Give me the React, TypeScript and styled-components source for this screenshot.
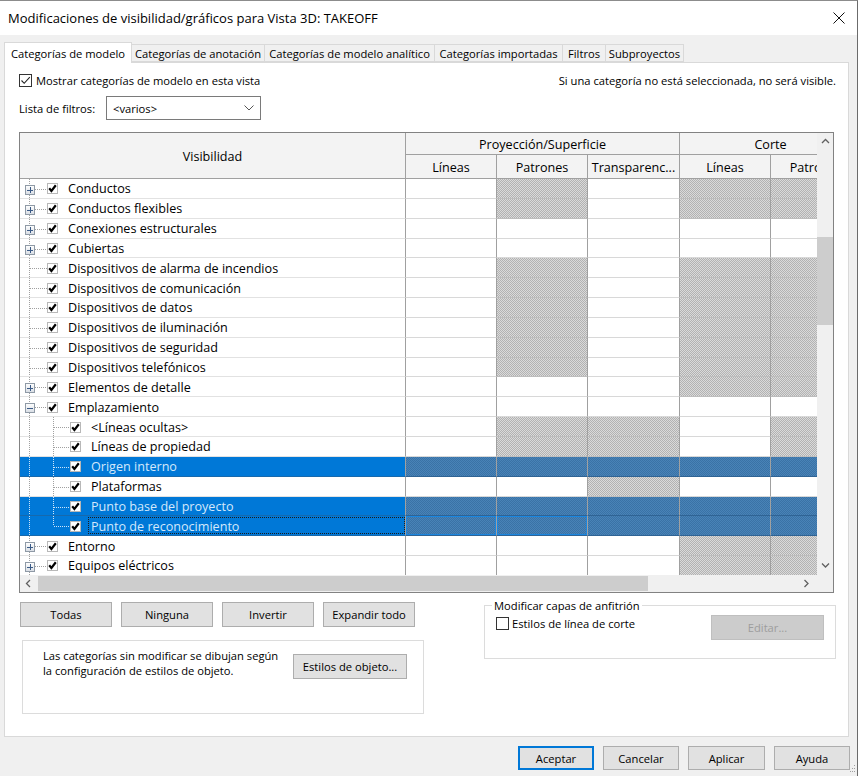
import React from "react";
import styled, { createGlobalStyle, css } from "styled-components";

const GlobalStyle = createGlobalStyle`
  html, body { margin: 0; padding: 0; background: #ffffff; }
  body {
    font-family: "Open Sans", "Liberation Sans", Arial, sans-serif;
    font-size: 11.2px;
    color: #000;
  }
  * { box-sizing: border-box; }
`;

type Row = {
  label: string;
  level?: 0 | 1;
  expander?: "plus" | "minus";
  hatch?: string;
  selected?: boolean;
  focused?: boolean;
  lastChild?: boolean;
};

const rows: Row[] = [
  { label: "Conductos", expander: "plus", hatch: "01011" },
  { label: "Conductos flexibles", expander: "plus", hatch: "01011" },
  { label: "Conexiones estructurales", expander: "plus", hatch: "00000" },
  { label: "Cubiertas", expander: "plus", hatch: "00000" },
  { label: "Dispositivos de alarma de incendios", hatch: "01011" },
  { label: "Dispositivos de comunicación", hatch: "01011" },
  { label: "Dispositivos de datos", hatch: "01011" },
  { label: "Dispositivos de iluminación", hatch: "01011" },
  { label: "Dispositivos de seguridad", hatch: "01011" },
  { label: "Dispositivos telefónicos", hatch: "01011" },
  { label: "Elementos de detalle", expander: "plus", hatch: "00011" },
  { label: "Emplazamiento", expander: "minus", hatch: "00000" },
  { label: "<Líneas ocultas>", level: 1, hatch: "01101" },
  { label: "Líneas de propiedad", level: 1, hatch: "01101" },
  { label: "Origen interno", level: 1, selected: true },
  { label: "Plataformas", level: 1, hatch: "00100" },
  { label: "Punto base del proyecto", level: 1, selected: true },
  { label: "Punto de reconocimiento", level: 1, selected: true, focused: true, lastChild: true },
  { label: "Entorno", expander: "plus", hatch: "00011" },
  { label: "Equipos eléctricos", expander: "plus", hatch: "00011" },
];

const COLS = "386px 91px 91px 92px 91px 91px";

const Window = styled.div`
  position: relative;
  width: 858px;
  height: 776px;
  background: #f0f0f0;
  border-top: 1px solid #8c8c8c;
  border-right: 1px solid #6b6b6b;
  display: flex;
  flex-direction: column;
`;

const TitleBar = styled.div`
  height: 34px;
  flex-shrink: 0;
  background: #ffffff;
  display: flex;
  align-items: center;
  justify-content: space-between;
  padding: 0 12px 0 8px;
  font-size: 13px;
`;

const Body = styled.div`
  padding-top: 7px;
  display: flex;
  flex-direction: column;
`;

const TabStrip = styled.div`
  display: flex;
  align-items: flex-end;
  height: 20px;
  margin-left: 4px;
  position: relative;
  z-index: 1;
`;

const Tab = styled.div<{ $w: number; $active?: boolean }>`
  width: ${(p) => p.$w}px;
  height: ${(p) => (p.$active ? 21 : 18)}px;
  margin-bottom: ${(p) => (p.$active ? -1 : 0)}px;
  background: ${(p) => (p.$active ? "#ffffff" : "#f0f0f0")};
  border: 1px solid #d9d9d9;
  border-bottom: ${(p) => (p.$active ? "none" : "1px solid #d9d9d9")};
  display: flex;
  align-items: center;
  justify-content: center;
  white-space: nowrap;
  & + & { margin-left: -1px; }
`;

const Panel = styled.div`
  margin-left: 4px;
  width: 845px;
  height: 675px;
  background: #ffffff;
  border: 1px solid #d9d9d9;
  display: flex;
  flex-direction: column;
`;

const TopRow = styled.div`
  display: flex;
  align-items: center;
  justify-content: space-between;
  height: 13px;
  margin-top: 11px;
  padding: 0 12px 0 14px;
`;

const CheckLabel = styled.label`
  display: flex;
  align-items: center;
  gap: 4px;
  white-space: nowrap;
`;

const WinCheck = styled.span`
  width: 13px;
  height: 13px;
  border: 1px solid #333333;
  background: #ffffff;
  display: inline-flex;
  align-items: center;
  justify-content: center;
  flex-shrink: 0;
`;

const FilterRow = styled.div`
  display: flex;
  align-items: center;
  height: 24px;
  margin-top: 9px;
  padding-left: 14px;
`;

const FilterLabel = styled.span`
  width: 87px;
`;

const Select = styled.div`
  width: 155px;
  height: 24px;
  border: 1px solid #7a7a7a;
  background: #ffffff;
  display: flex;
  align-items: center;
  justify-content: space-between;
  padding: 0 6px 0 6px;
`;

const GridFrame = styled.div`
  margin: 12px 0 0 14px;
  width: 815px;
  border: 1px solid #828282;
  display: grid;
  grid-template-columns: 797px 16px;
  grid-template-rows: 442px 17px;
`;

const Table = styled.div`
  width: 797px;
  overflow: hidden;
`;

const Header = styled.div`
  display: grid;
  width: 842px;
  grid-template-columns: ${COLS};
  grid-template-rows: 22px 24px;
`;

const HeadCell = styled.div<{ $col: string; $row: string }>`
  grid-column: ${(p) => p.$col};
  grid-row: ${(p) => p.$row};
  display: flex;
  align-items: center;
  justify-content: center;
  padding-top: 1px;
  background: #f3f3f3;
  border-right: 1px solid #a0a0a0;
  border-bottom: 1px solid #a0a0a0;
  font-size: 12.6px;
  white-space: nowrap;
  overflow: hidden;
`;

const TreeBody = styled.div`
  height: 396px;
  overflow: hidden;
`;

const RowLine = styled.div`
  display: grid;
  width: 842px;
  grid-template-columns: ${COLS};
  height: 19.85px;
`;

const TreeCell = styled.div<{ $sel?: boolean }>`
  display: flex;
  align-items: center;
  overflow: hidden;
  background: ${(p) => (p.$sel ? "#0078d7" : "#ffffff")};
  color: ${(p) => (p.$sel ? "#d4e8fb" : "#000000")};
  border-right: 1px solid #a0a0a0;
  border-bottom: 1px solid ${(p) => (p.$sel ? "#1669ad" : "#e2e2e2")};
  font-size: 12.6px;
  white-space: nowrap;
`;

const Gutter = styled.svg`
  flex-shrink: 0;
  align-self: flex-start;
`;

const TreeCheck = styled.svg`
  flex-shrink: 0;
  margin-top: 1px;
`;

const Label = styled.span<{ $focus?: boolean }>`
  margin-left: 10px;
  padding-top: 1px;
  ${(p) =>
    p.$focus &&
    css`
      margin: 1px 0 1px 7px;
      padding-left: 2px;
      align-self: stretch;
      flex: 1;
      display: flex;
      align-items: center;
      border: 1px dotted #1b1b1b;
    `}
`;

const hatchBg = "repeating-conic-gradient(#b2b2b2 0 25%, #dadada 0 50%) 0 0 / 2px 2px";
const selBg = "repeating-conic-gradient(#3a72a6 0 25%, #4983b7 0 50%) 0 0 / 2px 2px";

const DataCell = styled.div<{ $hatch?: boolean; $sel?: boolean; $focus?: boolean }>`
  border-right: 1px solid #a0a0a0;
  border-bottom: 1px solid ${(p) => (p.$sel ? "#2f6394" : p.$hatch ? "#bdbdbd" : "#d8d8d8")};
  background: ${(p) => (p.$sel ? selBg : p.$hatch ? hatchBg : "#ffffff")};
  ${(p) =>
    p.$focus &&
    css`
      box-shadow: inset 0 0 0 1px #1a86e0;
    `}
`;

const VScroll = styled.div`
  grid-column: 2;
  grid-row: 1;
  background: #f0f0f0;
  display: flex;
  flex-direction: column;
`;

const Arrow = styled.div<{ $size: number }>`
  flex: 0 0 ${(p) => p.$size}px;
  display: flex;
  align-items: center;
  justify-content: center;
`;

const VThumb = styled.div`
  height: 88px;
  margin-top: 87px;
  background: #cdcdcd;
`;

const Spacer = styled.div`
  flex: 1;
`;

const HScroll = styled.div`
  grid-column: 1;
  grid-row: 2;
  background: #f0f0f0;
  display: flex;
  align-items: center;
`;

const HThumb = styled.div`
  width: 610px;
  height: 15px;
  margin-left: 1px;
  background: #cdcdcd;
`;

const Corner = styled.div`
  grid-column: 2;
  grid-row: 2;
  background: #f0f0f0;
`;

const LowerArea = styled.div`
  display: flex;
  justify-content: space-between;
  align-items: flex-start;
  margin-top: 9px;
  padding: 0 12px 0 15px;
`;

const LeftCol = styled.div`
  display: flex;
  flex-direction: column;
`;

const ButtonRow = styled.div`
  display: flex;
  gap: 9px;
`;

const Button = styled.button<{ $w: number; $h?: number; $primary?: boolean; $off?: boolean }>`
  width: ${(p) => p.$w}px;
  height: ${(p) => p.$h ?? 25}px;
  padding: 0;
  font: inherit;
  color: ${(p) => (p.$off ? "#9d9d9d" : "#000000")};
  background: ${(p) => (p.$off ? "#cccccc" : "#e1e1e1")};
  border: 1px solid ${(p) => (p.$primary ? "#0078d7" : p.$off ? "#bfbfbf" : "#adadad")};
  ${(p) =>
    p.$primary &&
    css`
      box-shadow: inset 0 0 0 1px #0078d7;
    `}
`;

const InfoBox = styled.div`
  margin: 13px 0 0 2px;
  width: 402px;
  height: 74px;
  border: 1px solid #dcdcdc;
  display: flex;
  align-items: flex-start;
  padding: 7px 0 0 20px;
`;

const InfoText = styled.div`
  width: 250px;
  line-height: 15px;
`;

const InfoButton = styled(Button)`
  margin-top: 6px;
`;

const Group = styled.fieldset`
  margin: -4px 0 0 0;
  width: 352px;
  height: 61px;
  border: 1px solid #dcdcdc;
  padding: 2px 11px 0 11px;
`;

const GroupLegend = styled.legend`
  padding: 0 2px;
  margin-left: -4px;
`;

const GroupRow = styled.div`
  display: flex;
  justify-content: space-between;
  align-items: flex-start;
`;

const GroupCheck = styled(CheckLabel)`
  margin-top: 1px;
  gap: 3px;
`;

const Footer = styled.div`
  display: flex;
  justify-content: flex-end;
  gap: 9px;
  padding: 9px 7px 0 0;
`;

const Grip = styled.svg`
  position: absolute;
  right: 1px;
  bottom: 3px;
`;

const Chevron = ({ dir }: { dir: "up" | "down" | "left" | "right" }) => {
  const d = {
    up: "M1 5 L4.5 1.5 L8 5",
    down: "M1 1.5 L4.5 5 L8 1.5",
    left: "M5 1 L1.5 4.5 L5 8",
    right: "M1.5 1 L5 4.5 L1.5 8",
  }[dir];
  const v = dir === "up" || dir === "down";
  return (
    <svg width={v ? 9 : 7} height={v ? 7 : 9}>
      <path d={d} stroke="#606060" strokeWidth={1.3} fill="none" />
    </svg>
  );
};

const TreeGutter = ({ row }: { row: Row }) => {
  const c = row.selected ? "#cfe4f8" : "#a0a0a0";
  const w = row.level === 1 ? 50 : 27;
  const dot = { stroke: c, strokeDasharray: "1 1", shapeRendering: "crispEdges" as const };
  return (
    <Gutter width={w} height={20} viewBox={`0 0 ${w} 20`}>
      <line x1={9.5} y1={0} x2={9.5} y2={20} {...dot} />
      {row.level === 1 ? (
        <>
          <line x1={33.5} y1={0} x2={33.5} y2={row.lastChild ? 10 : 20} {...dot} />
          <line x1={34} y1={10.5} x2={50} y2={10.5} {...dot} />
        </>
      ) : row.expander ? (
        <>
          <line x1={15} y1={10.5} x2={27} y2={10.5} {...dot} />
          <defs>
            <linearGradient id="exp" x1="0" y1="0" x2="0" y2="1">
              <stop offset="0" stopColor="#ffffff" />
              <stop offset="1" stopColor="#d8dde4" />
            </linearGradient>
          </defs>
          <rect x={5.5} y={6.5} width={9} height={9} fill="url(#exp)" stroke="#8f9aa6" shapeRendering="crispEdges" />
          <line x1={7} y1={11} x2={13} y2={11} stroke="#3a5a86" shapeRendering="crispEdges" />
          {row.expander === "plus" && (
            <line x1={10} y1={8} x2={10} y2={14} stroke="#3a5a86" shapeRendering="crispEdges" />
          )}
        </>
      ) : (
        <line x1={10} y1={10.5} x2={27} y2={10.5} {...dot} />
      )}
    </Gutter>
  );
};

const CheckMark = () => (
  <TreeCheck width={11} height={11}>
    <rect x={0.5} y={0.5} width={10} height={10} fill="#ffffff" stroke="#b8b8b8" />
    <path d="M2.2 5.3 L4.4 7.9 L8.8 2.3" stroke="#000000" strokeWidth={2.2} fill="none" />
  </TreeCheck>
);

const TableRow = ({ row }: { row: Row }) => {
  const h = row.hatch ?? "00000";
  return (
    <RowLine>
      <TreeCell $sel={row.selected}>
        <TreeGutter row={row} />
        <CheckMark />
        <Label $focus={row.focused}>{row.label}</Label>
      </TreeCell>
      {[0, 1, 2, 3, 4].map((i) => (
        <DataCell
          key={i}
          $hatch={h[i] === "1"}
          $sel={row.selected}
          $focus={row.focused && i < 2}
        />
      ))}
    </RowLine>
  );
};

export default function App() {
  return (
    <>
      <GlobalStyle />
      <Window>
        <TitleBar>
          <span>Modificaciones de visibilidad/gráficos para Vista 3D: TAKEOFF</span>
          <svg width={12} height={12}>
            <path d="M0.5 0.5 L11.5 11.5 M11.5 0.5 L0.5 11.5" stroke="#111" strokeWidth={1} />
          </svg>
        </TitleBar>
        <Body>
          <TabStrip>
            <Tab $w={128} $active>Categorías de modelo</Tab>
            <Tab $w={134}>Categorías de anotación</Tab>
            <Tab $w={171}>Categorías de modelo analítico</Tab>
            <Tab $w={129}>Categorías importadas</Tab>
            <Tab $w={44}>Filtros</Tab>
            <Tab $w={79}>Subproyectos</Tab>
          </TabStrip>
          <Panel>
            <TopRow>
              <CheckLabel>
                <WinCheck>
                  <svg width={11} height={11}>
                    <path d="M1.5 5.5 L4.2 8.3 L9.8 2.2" stroke="#222" strokeWidth={1.1} fill="none" />
                  </svg>
                </WinCheck>
                Mostrar categorías de modelo en esta vista
              </CheckLabel>
              <span>Si una categoría no está seleccionada, no será visible.</span>
            </TopRow>
            <FilterRow>
              <FilterLabel>Lista de filtros:</FilterLabel>
              <Select>
                <span>&lt;varios&gt;</span>
                <svg width={10} height={6}>
                  <path d="M0.5 0.5 L5 5 L9.5 0.5" stroke="#555" fill="none" />
                </svg>
              </Select>
            </FilterRow>
            <GridFrame>
              <Table>
                <Header>
                  <HeadCell $col="1" $row="1 / span 2">Visibilidad</HeadCell>
                  <HeadCell $col="2 / span 3" $row="1">Proyección/Superficie</HeadCell>
                  <HeadCell $col="5 / span 2" $row="1">Corte</HeadCell>
                  <HeadCell $col="2" $row="2">Líneas</HeadCell>
                  <HeadCell $col="3" $row="2">Patrones</HeadCell>
                  <HeadCell $col="4" $row="2">Transparenc...</HeadCell>
                  <HeadCell $col="5" $row="2">Líneas</HeadCell>
                  <HeadCell $col="6" $row="2">Patrones</HeadCell>
                </Header>
                <TreeBody>
                  {rows.map((r) => (
                    <TableRow key={r.label} row={r} />
                  ))}
                </TreeBody>
              </Table>
              <VScroll>
                <Arrow $size={17}>
                  <Chevron dir="up" />
                </Arrow>
                <VThumb />
                <Spacer />
                <Arrow $size={20}>
                  <Chevron dir="down" />
                </Arrow>
              </VScroll>
              <HScroll>
                <Arrow $size={17}>
                  <Chevron dir="left" />
                </Arrow>
                <HThumb />
                <Spacer />
                <Arrow $size={22}>
                  <Chevron dir="right" />
                </Arrow>
              </HScroll>
              <Corner />
            </GridFrame>
            <LowerArea>
              <LeftCol>
                <ButtonRow>
                  <Button $w={92}>Todas</Button>
                  <Button $w={92}>Ninguna</Button>
                  <Button $w={92}>Invertir</Button>
                  <Button $w={92}>Expandir todo</Button>
                </ButtonRow>
                <InfoBox>
                  <InfoText>
                    Las categorías sin modificar se dibujan según
                    <br />
                    la configuración de estilos de objeto.
                  </InfoText>
                  <InfoButton $w={114}>Estilos de objeto...</InfoButton>
                </InfoBox>
              </LeftCol>
              <Group>
                <GroupLegend>Modificar capas de anfitrión</GroupLegend>
                <GroupRow>
                  <GroupCheck>
                    <WinCheck />
                    Estilos de línea de corte
                  </GroupCheck>
                  <Button $w={113} $off>Editar...</Button>
                </GroupRow>
              </Group>
            </LowerArea>
          </Panel>
          <Footer>
            <Button $w={76} $h={24} $primary>Aceptar</Button>
            <Button $w={76} $h={24}>Cancelar</Button>
            <Button $w={77} $h={24}>Aplicar</Button>
            <Button $w={76} $h={24}>Ayuda</Button>
          </Footer>
        </Body>
        <Grip width={6} height={8}>
          <rect x={4} y={0} width={1} height={1} fill="#a0a0a0" />
          <rect x={2} y={3} width={1} height={1} fill="#a0a0a0" />
          <rect x={4} y={3} width={1} height={1} fill="#a0a0a0" />
          <rect x={0} y={6} width={1} height={1} fill="#a0a0a0" />
          <rect x={2} y={6} width={1} height={1} fill="#a0a0a0" />
          <rect x={4} y={6} width={1} height={1} fill="#a0a0a0" />
        </Grip>
      </Window>
    </>
  );
}
